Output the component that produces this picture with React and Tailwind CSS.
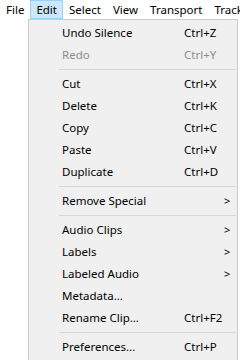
import React from 'react';

const menuBar = ['File', 'Edit', 'Select', 'View', 'Transport', 'Tracks'];

const items = [
    { label: 'Undo Silence', key: 'Ctrl+Z' },
    { label: 'Redo', key: 'Ctrl+Y', disabled: true },
    { sep: true },
    { label: 'Cut', key: 'Ctrl+X' },
    { label: 'Delete', key: 'Ctrl+K' },
    { label: 'Copy', key: 'Ctrl+C' },
    { label: 'Paste', key: 'Ctrl+V' },
    { label: 'Duplicate', key: 'Ctrl+D' },
    { sep: true },
    { label: 'Remove Special', sub: true },
    { sep: true },
    { label: 'Audio Clips', sub: true },
    { label: 'Labels', sub: true },
    { label: 'Labeled Audio', sub: true },
    { label: 'Metadata...' },
    { label: 'Rename Clip...', key: 'Ctrl+F2' },
    { sep: true },
    { label: 'Preferences...', key: 'Ctrl+P' },
];

export default function App() {
    return (
        <div className="w-[240px] h-[360px] overflow-hidden bg-white text-[11.5px] text-black" style={{ fontFamily: '"Segoe UI", "Noto Sans", sans-serif' }}>
            {/* Menu bar */}
            <div className="flex h-[19px] items-stretch whitespace-nowrap overflow-hidden">
                {menuBar.map(m => (
                    <div
                        key={m}
                        className={
                            m === 'Edit'
                                ? 'flex items-center px-[5px] bg-[#cce8ff] border border-[#99d1ff] h-[19px] shrink-0'
                                : 'flex items-center px-[6px] h-[19px] shrink-0'
                        }
                    >
                        {m}
                    </div>
                ))}
            </div>

            {/* Edit dropdown */}
            <div className="ml-[28px] w-[210px] bg-[#f0f0f0] border border-[#cccccc] pt-[2px] pb-[3px]">
                {items.map((it, i) =>
                    it.sep ? (
                        <div key={i} className="h-[7px] flex items-center pl-[30px] pr-[1px]">
                            <div className="h-px w-full bg-[#d7d7d7]" />
                        </div>
                    ) : (
                        <div
                            key={i}
                            className={`h-[22px] flex items-center pl-[33px] ${it.disabled ? 'text-[#8d8d8d]' : ''}`}
                        >
                            <span className="flex-1">{it.label}</span>
                            {it.key && <span className="w-[53px]">{it.key}</span>}
                            {it.sub && <span className="w-[13px] text-[11px]">&gt;</span>}
                        </div>
                    )
                )}
            </div>
        </div>
    );
}
